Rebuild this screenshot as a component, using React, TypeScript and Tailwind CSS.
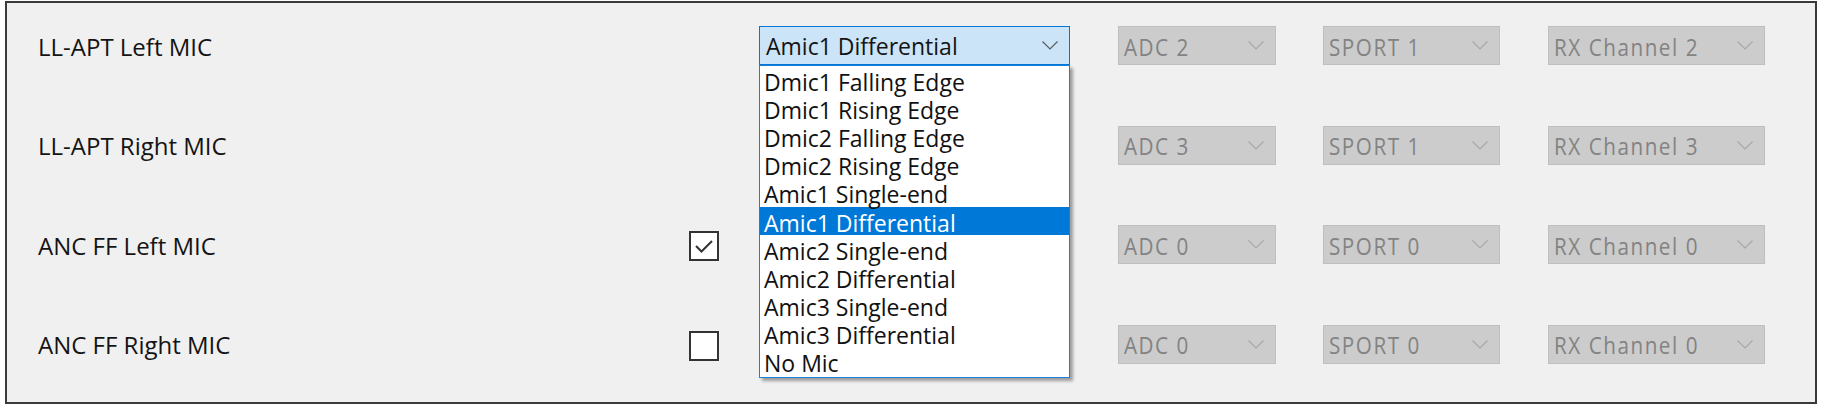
import React from "react";

const items = [
  "Dmic1 Falling Edge",
  "Dmic1 Rising Edge",
  "Dmic2 Falling Edge",
  "Dmic2 Rising Edge",
  "Amic1 Single-end",
  "Amic1 Differential",
  "Amic2 Single-end",
  "Amic2 Differential",
  "Amic3 Single-end",
  "Amic3 Differential",
  "No Mic",
];

const FONT = "font-['Open_Sans','Noto_Sans',sans-serif]";

function Chevron({ color }: { color: string }) {
  return (
    <svg width="16" height="9" viewBox="0 0 16 9" className="shrink-0">
      <polyline points="0.5,0.5 8,8 15.5,0.5" fill="none" stroke={color} strokeWidth="1.2" />
    </svg>
  );
}

function Disabled({ text, w }: { text: string; w: string }) {
  return (
    <div className={`${w} h-[39px] bg-[#cccccc] border border-[#bfbfbf] flex items-center justify-between pl-[5px] pr-[11px]`}>
      <span className="text-[24px] leading-none text-[#838383] origin-left scale-x-[0.86] tracking-[1.8px] whitespace-nowrap translate-y-[1px]">
        {text}
      </span>
      <Chevron color="#a8a8a8" />
    </div>
  );
}

function Checkbox({ checked }: { checked: boolean }) {
  return (
    <div className="w-[30px] h-[30px] border-2 border-[#333333] bg-white flex items-center justify-center mt-[3px]">
      {checked && (
        <svg width="20" height="16" viewBox="0 0 20 16">
          <polyline points="2,8 7.5,13.5 18,3" fill="none" stroke="#333333" strokeWidth="2" />
        </svg>
      )}
    </div>
  );
}

function Row({
  label,
  check,
  adc,
  sport,
  rx,
  open,
}: {
  label: string;
  check: null | boolean;
  adc: string;
  sport: string;
  rx: string;
  open?: boolean;
}) {
  return (
    <div className="flex items-center h-[39px]">
      <div className="w-[651px] text-[24px] text-[#141414] leading-none translate-y-[1px]">{label}</div>
      <div className="w-[30px] flex justify-center">{check !== null && <Checkbox checked={check} />}</div>
      <div className="w-[311px] ml-[40px] relative h-[39px]">
        {open && (
          <>
            <div className="h-[39px] bg-[#cce4f7] border border-[#0078d7] flex items-center justify-between pl-[6px] pr-[11px]">
              <span className="text-[23px] leading-none text-[#141414] translate-y-[1px]">Amic1 Differential</span>
              <Chevron color="#5a5a5a" />
            </div>
            <div className="absolute left-0 top-[39px] w-[311px] bg-white border border-[#1a80d8] pb-[1px] z-10 shadow-[3px_3px_3px_rgba(0,0,0,0.35)]">
              {items.map((it) => (
                <div
                  key={it}
                  className={`h-[28.2px] flex items-center pl-[4px] pt-[4px] text-[23px] leading-none ${
                    it === "Amic1 Differential" ? "bg-[#0078d7] text-white" : "text-[#111111]"
                  }`}
                >
                  {it}
                </div>
              ))}
            </div>
          </>
        )}
      </div>
      <div className="ml-[48px]">
        <Disabled text={adc} w="w-[158px]" />
      </div>
      <div className="ml-[47px]">
        <Disabled text={sport} w="w-[177px]" />
      </div>
      <div className="ml-[48px]">
        <Disabled text={rx} w="w-[217px]" />
      </div>
    </div>
  );
}

export default function App() {
  return (
    <div className={`w-[1823px] h-[406px] bg-white pt-[1px] pl-[5px] ${FONT}`}>
      <div className="w-[1812px] h-[403px] border-2 border-[#3a3a3a] bg-[#f0f0f0] pl-[31px] pt-[23px] flex flex-col gap-[60.5px]">
        <Row label="LL-APT Left MIC" check={null} adc="ADC 2" sport="SPORT 1" rx="RX Channel 2" open />
        <Row label="LL-APT Right MIC" check={null} adc="ADC 3" sport="SPORT 1" rx="RX Channel 3" />
        <Row label="ANC FF Left MIC" check={true} adc="ADC 0" sport="SPORT 0" rx="RX Channel 0" />
        <Row label="ANC FF Right MIC" check={false} adc="ADC 0" sport="SPORT 0" rx="RX Channel 0" />
      </div>
    </div>
  );
}
